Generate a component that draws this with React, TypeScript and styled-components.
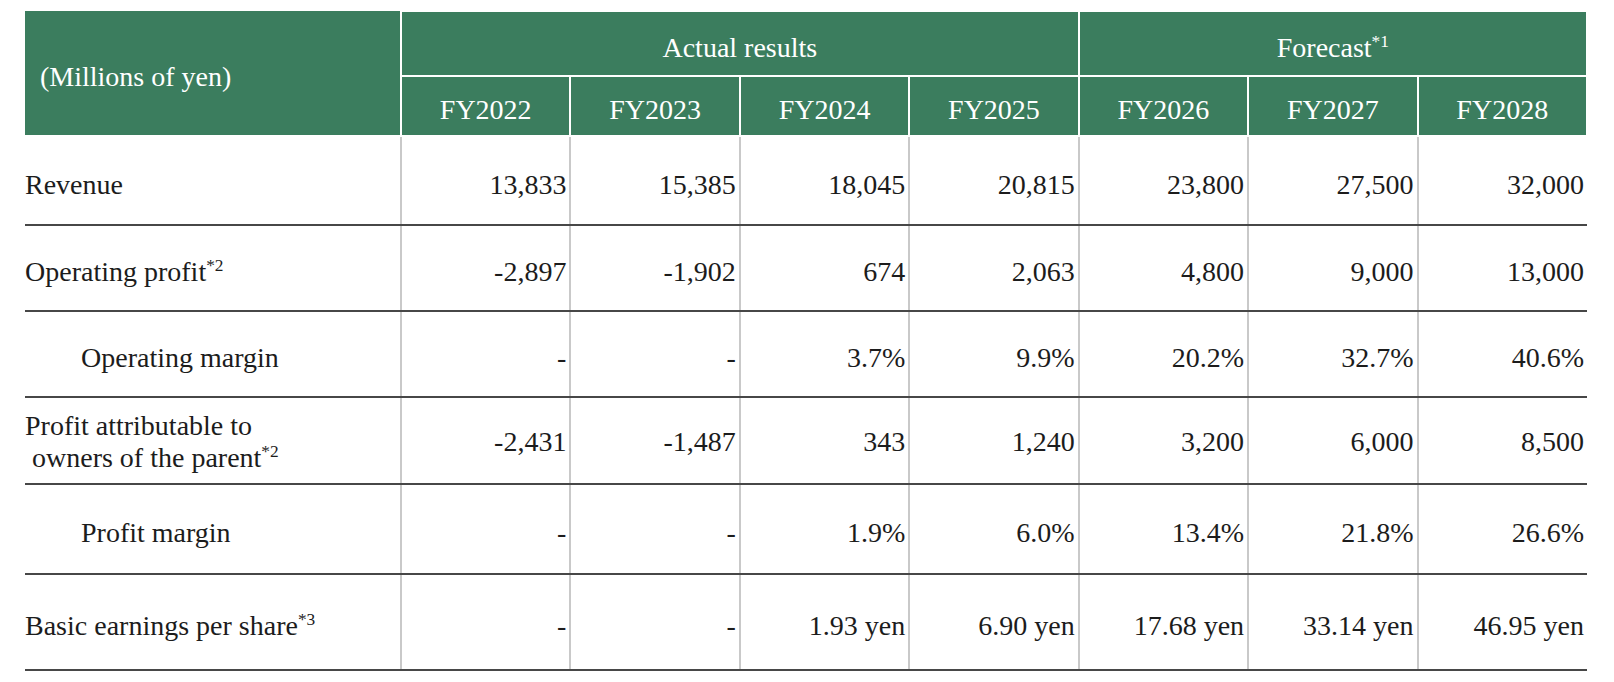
import React from "react";
import styled, { createGlobalStyle } from "styled-components";

const GlobalStyle = createGlobalStyle`
	html, body {
		margin: 0;
		padding: 0;
		background: #fff;
	}
	body {
		font-family: "Liberation Serif", "DejaVu Serif", serif;
		color: #1c1c1c;
	}
`;

const Page = styled.div`
	padding: 10px 0 0 25px;
`;

const ResultsTable = styled.table`
	width: 1563px;
	table-layout: fixed;
	border-collapse: collapse;
	border-spacing: 0;
	font-family: "Liberation Serif", "DejaVu Serif", serif;
	font-size: 28px;
	line-height: 1.12;

	th,
	td {
		font-family: "Liberation Serif", "DejaVu Serif", serif;
	}
`;

const HeadRow = styled.tr<{ $height: number }>`
	height: ${(p) => p.$height}px;
`;

const HeadCell = styled.th`
	background: #3b7d5e;
	color: #fff;
	font-weight: normal;
	text-align: center;
	vertical-align: middle;
	padding: 8px 0 0;
	border: 2px solid #fff;
	white-space: nowrap;
`;

const CornerCell = styled(HeadCell)`
	text-align: left;
	padding-left: 15px;
	border-left: none;
	border-top: none;
`;

const BodyRow = styled.tr<{ $height: number; $shift: number }>`
	height: ${(p) => p.$height}px;
	td {
		padding-top: ${(p) => p.$shift}px;
		border-bottom: 2px solid #474747;
	}
`;

const LabelCell = styled.td<{ $indent?: boolean }>`
	vertical-align: middle;
	padding-right: 0;
	padding-bottom: 0;
	padding-left: ${(p) => (p.$indent ? 56 : 0)}px;
	white-space: nowrap;
	color: #1c1c1c;
`;

const ValueCell = styled.td`
	vertical-align: middle;
	text-align: right;
	padding-right: 3px;
	padding-bottom: 0;
	padding-left: 0;
	border-left: 2px solid #c9c9c9;
	white-space: nowrap;
	color: #1c1c1c;
`;

const Sup = styled.sup`
	font-size: 0.62em;
	line-height: 0;
	vertical-align: 0.55em;
`;

const SecondLine = styled.span`
	padding-left: 7px;
`;

type RowType = {
	label: React.ReactNode;
	indent?: boolean;
	values: string[];
	height: number;
	shift: number;
};

const years = ["FY2022", "FY2023", "FY2024", "FY2025", "FY2026", "FY2027", "FY2028"];

const rows: RowType[] = [
	{
		label: "Revenue",
		values: ["13,833", "15,385", "18,045", "20,815", "23,800", "27,500", "32,000"],
		height: 89,
		shift: 8,
	},
	{
		label: (
			<>
				Operating profit<Sup>*2</Sup>
			</>
		),
		values: ["-2,897", "-1,902", "674", "2,063", "4,800", "9,000", "13,000"],
		height: 86,
		shift: 8,
	},
	{
		label: "Operating margin",
		indent: true,
		values: ["-", "-", "3.7%", "9.9%", "20.2%", "32.7%", "40.6%"],
		height: 86,
		shift: 8,
	},
	{
		label: (
			<>
				Profit attributable to
				<br />
				<SecondLine>
					owners of the parent<Sup>*2</Sup>
				</SecondLine>
			</>
		),
		values: ["-2,431", "-1,487", "343", "1,240", "3,200", "6,000", "8,500"],
		height: 87,
		shift: 2,
	},
	{
		label: "Profit margin",
		indent: true,
		values: ["-", "-", "1.9%", "6.0%", "13.4%", "21.8%", "26.6%"],
		height: 90,
		shift: 8,
	},
	{
		label: (
			<>
				Basic earnings per share<Sup>*3</Sup>
			</>
		),
		values: ["-", "-", "1.93 yen", "6.90 yen", "17.68 yen", "33.14 yen", "46.95 yen"],
		height: 96,
		shift: 8,
	},
];

export default function App() {
	return (
		<>
			<GlobalStyle />
			<Page>
				<ResultsTable>
					<colgroup>
						<col style={{ width: 376 }} />
						{years.map((y) => (
							<col key={y} />
						))}
					</colgroup>
					<thead>
						<HeadRow $height={65}>
							<CornerCell rowSpan={2}>(Millions of yen)</CornerCell>
							<HeadCell colSpan={4}>Actual results</HeadCell>
							<HeadCell colSpan={3}>
								Forecast<Sup>*1</Sup>
							</HeadCell>
						</HeadRow>
						<HeadRow $height={60}>
							{years.map((y) => (
								<HeadCell key={y}>{y}</HeadCell>
							))}
						</HeadRow>
					</thead>
					<tbody>
						{rows.map((row, i) => (
							<BodyRow key={i} $height={row.height} $shift={row.shift}>
								<LabelCell $indent={row.indent}>{row.label}</LabelCell>
								{row.values.map((v, j) => (
									<ValueCell key={j}>{v}</ValueCell>
								))}
							</BodyRow>
						))}
					</tbody>
				</ResultsTable>
			</Page>
		</>
	);
}
